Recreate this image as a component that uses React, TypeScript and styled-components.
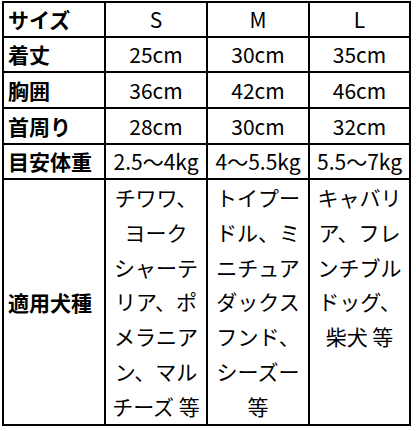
import * as React from "react";
import styled, { createGlobalStyle } from "styled-components";

const GlobalStyle = createGlobalStyle`
    html, body {
        margin: 0;
        padding: 0;
        background: #fff;
    }
    body {
        font-family: "Noto Sans CJK JP", "Noto Sans", sans-serif;
        color: #000;
    }
`;

const Page = styled.div`
    padding: 1px 0 0 2px;
`;

const SizeGrid = styled.div`
    display: grid;
    grid-template-columns: 100px 100px 100px 99px;
    grid-template-rows: 33px 33px 34px 34px 33px 244px;
    gap: 2px;
    padding: 2px;
    width: max-content;
    background: #000;
`;

const Cell = styled.div<{ label?: boolean; top?: boolean }>`
    background: #fff;
    display: flex;
    align-items: ${props => props.top ? "flex-start" : "center"};
    justify-content: ${props => props.label ? "flex-start" : "center"};
    padding-left: ${props => props.label ? "4px" : 0};
    font-size: 21px;
    font-weight: ${props => props.label ? 700 : 400};
    line-height: 1;
    white-space: nowrap;
`;

const Breeds = styled.div`
    text-align: center;
    line-height: 34.8px;
    margin-top: 0;
`;

type Row = {
    name: string,
    values: string[]
}

const rows: Row[] = [
    { name: "サイズ", values: ["S", "M", "L"] },
    { name: "着丈", values: ["25cm", "30cm", "35cm"] },
    { name: "胸囲", values: ["36cm", "42cm", "46cm"] },
    { name: "首周り", values: ["28cm", "30cm", "32cm"] },
    { name: "目安体重", values: ["2.5〜4kg", "4〜5.5kg", "5.5〜7kg"] },
];

const breeds: string[][] = [
    ["チワワ、", "ヨーク", "シャーテ", "リア、ポ", "メラニア", "ン、マル", "チーズ 等"],
    ["トイプー", "ドル、ミ", "ニチュア", "ダックス", "フンド、", "シーズー", "等"],
    ["キャバリ", "ア、フレ", "ンチブル", "ドッグ、", "柴犬 等"],
];

export default function App() {
    return (
        <>
            <GlobalStyle />
            <Page>
                <SizeGrid>
                    {rows.map(row => (
                        <React.Fragment key={row.name}>
                            <Cell label>{row.name}</Cell>
                            {row.values.map((v, i) => (
                                <Cell key={i}>{v}</Cell>
                            ))}
                        </React.Fragment>
                    ))}
                    <Cell label>適用犬種</Cell>
                    {breeds.map((lines, i) => (
                        <Cell key={i} top>
                            <Breeds>
                                {lines.map((l, j) => (
                                    <div key={j}>{l}</div>
                                ))}
                            </Breeds>
                        </Cell>
                    ))}
                </SizeGrid>
            </Page>
        </>
    );
}
